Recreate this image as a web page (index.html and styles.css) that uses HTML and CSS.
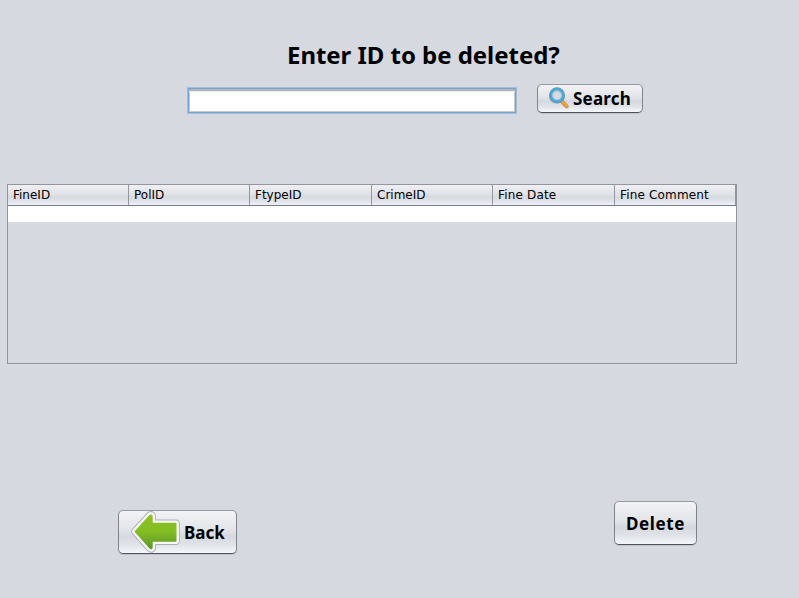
FILE: index.html
```html
<!DOCTYPE html>
<html lang="en">
<head>
<meta charset="utf-8">
<title>Delete Fine</title>
<link rel="stylesheet" href="styles.css">
</head>
<body>
<main class="window">
  <h1 class="title"><span>Enter ID to be deleted?</span></h1>
  <form class="search">
    <input class="field" type="text" aria-label="ID">
    <button class="button button-search" type="button">
      <svg width="22" height="22" viewBox="0 0 22 22" aria-hidden="true">
        <path d="M13.6 14.2 L18.6 19.4" stroke="#b98d57" stroke-width="4" stroke-linecap="round"/>
        <path d="M13.8 14 L18.6 19" stroke="#f0a030" stroke-width="2.8" stroke-linecap="round"/>
        <circle cx="9" cy="8.4" r="6.2" fill="#d5e1e9" stroke="#7895a8" stroke-width="3.8"/>
        <circle cx="9" cy="8.4" r="6.2" fill="#d5dbe1" stroke="#4aa9d8" stroke-width="2.8"/>
        <circle cx="9" cy="8.4" r="4.4" fill="none" stroke="#a9bac6" stroke-width=".9"/>
      </svg>
      <span>Search</span>
    </button>
  </form>
  <div class="scroll">
    <table class="grid">
      <colgroup><col class="col-id"><col class="col-id"><col class="col-type"><col class="col-id"><col class="col-type"><col></colgroup>
      <thead><tr><th>FineID</th><th>PolID</th><th>FtypeID</th><th>CrimeID</th><th class="wide">Fine Date</th><th class="wide">Fine Comment</th></tr></thead>
      <tbody><tr><td></td><td></td><td></td><td></td><td></td><td></td></tr></tbody>
    </table>
  </div>
  <div class="actions">
    <button class="button button-back" type="button">
      <svg width="50" height="42" viewBox="0 0 50 42" aria-hidden="true">
        <defs><linearGradient id="leaf" x1="0" y1="0" x2="0" y2="1"><stop offset="0" stop-color="#8cc126"/><stop offset=".5" stop-color="#83bd22"/><stop offset="1" stop-color="#5b962c"/></linearGradient></defs>
        <g stroke-linejoin="round">
          <path d="M4.3 20.5 L19 4.5 Q21 3.3 21 6 V12.5 H44.8 V30 H21 V36 Q21 38.7 19 37 Z" fill="#adafb1" stroke="#adafb1" stroke-width="8"/>
          <path d="M4.3 20.5 L19 4.5 Q21 3.3 21 6 V12.5 H44.8 V30 H21 V36 Q21 38.7 19 37 Z" fill="#f8f8f8" stroke="#f8f8f8" stroke-width="6.2"/>
          <path d="M4.3 20.5 L19 4.5 Q21 3.3 21 6 V12.5 H44.8 V30 H21 V36 Q21 38.7 19 37 Z" fill="url(#leaf)" stroke="url(#leaf)" stroke-width="1.4"/>
        </g>
      </svg>
      <span>Back</span>
    </button>
    <button class="button button-delete" type="button"><span>Delete</span></button>
  </div>
</main>
</body>
</html>
```
FILE: styles.css
```css
* { box-sizing: border-box; }
body { margin: 0; background: #d6d9e0; color: #000; }
.window { width: 799px; height: 598px; overflow: hidden; padding: 38px 0 0 7px; }
.title { margin: 0 0 0 280px; height: 46px; font: bold 24px/34px "Noto Sans", sans-serif; white-space: nowrap; letter-spacing: -0.04px; }
.search { display: flex; align-items: flex-start; margin-left: 180px; height: 100px; }
.field { width: 330px; height: 27px; margin-top: 3px; padding: 2px 6px; background: #fff; border: 1px solid #a4bddb; outline: none; box-shadow: inset 0 0 0 1px #73a4d1, inset 0 2px 0 1px #b5b5b9, inset 0 3px 0 1px #ececee, inset 0 0 0 2px #c6c8cc; }
.button { display: flex; align-items: center; padding: 0; border: 1px solid #7f838b; border-top-color: #969aa2; border-bottom-color: #4f545c; border-radius: 5px; background: linear-gradient(#f3f3f6, #e2e4e8 45%, #d5d9df 60%, #e0e4e9 80%, #f4f7fb); box-shadow: 0 1px 0 #bfc3ca; color: #000; font: bold 17px/24px "Noto Sans", sans-serif; white-space: nowrap; }
.button-search { width: 106px; height: 29px; margin-left: 20px; padding-left: 10px; gap: 3px; letter-spacing: 0.2px; }
.button-search svg { margin-top: -1px; }
.scroll { width: 730px; height: 180px; border: 1px solid #92969f; }
.grid { width: 728px; table-layout: fixed; border-collapse: separate; border-spacing: 0; }
.col-id { width: 121px; }
.col-id:nth-child(4) { width: 121px; }
.col-id:nth-child(2) { width: 121px; }
.col-type { width: 122px; }
.col-type:nth-child(5) { width: 122px; }
.grid th { height: 21px; padding: 0 0 0 5px; border-right: 1px solid #92969f; border-bottom: 1px solid #747b88; background: linear-gradient(#f0f0f3, #e0e1e6 48%, #d6d9de 58%, #dfe2e8 80%, #edf1f6); font: 12px/18px "DejaVu Sans", sans-serif; text-align: left; white-space: nowrap; }
.grid th.wide { letter-spacing: 0.17px; }
.grid td { height: 16px; padding: 0; background: #fff; }
.actions { display: flex; align-items: flex-start; height: 70px; margin: 137px 0 0 111px; }
.button-back { width: 119px; height: 44px; margin-top: 9px; padding-left: 12px; gap: 3px; }
.button-delete { width: 83px; height: 44px; margin-left: 377px; justify-content: center; letter-spacing: 0.6px; }
.actions span { padding-top: 2px; }
```
